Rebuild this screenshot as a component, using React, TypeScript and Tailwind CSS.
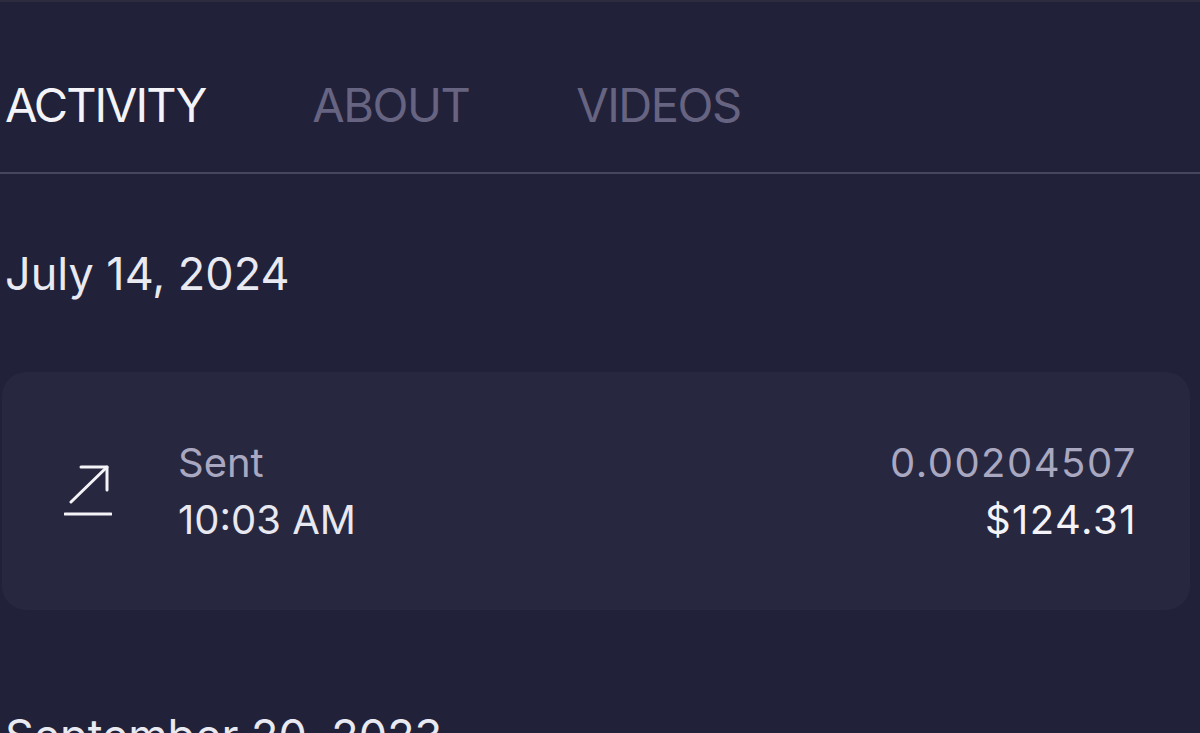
const tabs = [
  { label: 'ACTIVITY', active: true },
  { label: 'ABOUT', active: false },
  { label: 'VIDEOS', active: false },
]

function SentIcon() {
  return (
    <svg width="48" height="52" viewBox="0 0 48 52" fill="none" stroke="#f4f4f8" strokeWidth="3" strokeLinecap="round" strokeLinejoin="round">
      <path d="M7 37 L43 2" />
      <path d="M17 2 H43 V25" />
      <path d="M1 49 H47" />
    </svg>
  )
}

export default function App() {
  return (
    <div className="h-[733px] w-[1200px] overflow-hidden bg-[#22213a] font-['Inter','Liberation_Sans',sans-serif]">
      <div className="h-[2px] bg-[#2d2c3e]" />
      <nav className="flex h-[170px] gap-[107px] pl-[5px] pt-[79px]">
        {tabs.map((tab) => (
          <span
            key={tab.label}
            className={`text-[47px] leading-[48px] ${tab.active ? 'tracking-[-2px] text-[#f3f3f8]' : 'tracking-[-1.5px] text-[#676482]'}`}
          >
            {tab.label}
          </span>
        ))}
      </nav>
      <div className="h-[2px] bg-[#48465f]" />

      <h2 className="mt-[77px] pl-[5px] text-[45px] leading-[46px] text-[#e9e9f1]">July 14, 2024</h2>

      <div className="ml-[2px] mt-[75px] flex h-[238px] w-[1188px] items-center rounded-[24px] bg-[#27273f] pl-[62px] pr-[53px]">
        <SentIcon />
        <div className="ml-[66px] text-[40px] leading-[57px]">
          <p className="text-[#a9a8c0]">Sent</p>
          <p className="text-[#e8e8f0]">10:03 AM</p>
        </div>
        <div className="ml-auto text-right text-[40px] leading-[57px] tracking-[1.5px]">
          <p className="text-[#a9a8c0]">0.00204507</p>
          <p className="text-[#f3f3f8]">$124.31</p>
        </div>
      </div>

      <h2 className="mt-[103px] pl-[5px] text-[45px] leading-[46px] text-[#e9e9f1]">September 20, 2023</h2>
    </div>
  )
}
